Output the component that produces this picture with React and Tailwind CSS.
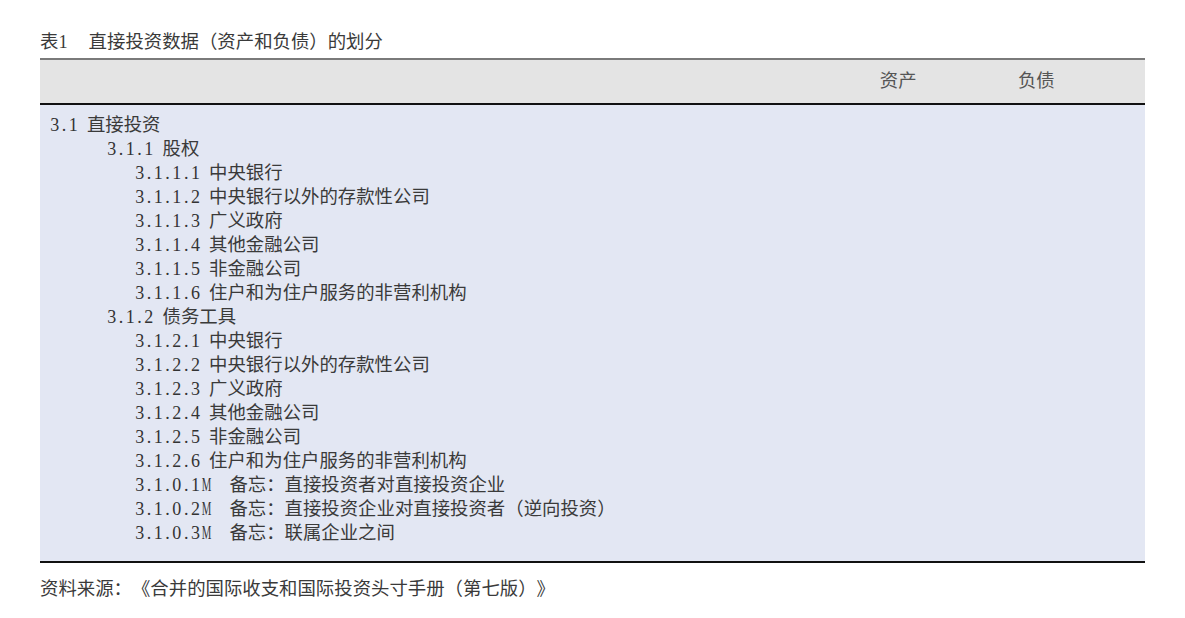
import React from "react";

const cjk = { fontFamily: '"Noto Sans CJK SC", "Noto Sans", sans-serif' };

const rows = [
  { no: "3.1", text: "直接投资", level: 1 },
  { no: "3.1.1", text: "股权", level: 2 },
  { no: "3.1.1.1", text: "中央银行", level: 3 },
  { no: "3.1.1.2", text: "中央银行以外的存款性公司", level: 3 },
  { no: "3.1.1.3", text: "广义政府", level: 3 },
  { no: "3.1.1.4", text: "其他金融公司", level: 3 },
  { no: "3.1.1.5", text: "非金融公司", level: 3 },
  { no: "3.1.1.6", text: "住户和为住户服务的非营利机构", level: 3 },
  { no: "3.1.2", text: "债务工具", level: 2 },
  { no: "3.1.2.1", text: "中央银行", level: 3 },
  { no: "3.1.2.2", text: "中央银行以外的存款性公司", level: 3 },
  { no: "3.1.2.3", text: "广义政府", level: 3 },
  { no: "3.1.2.4", text: "其他金融公司", level: 3 },
  { no: "3.1.2.5", text: "非金融公司", level: 3 },
  { no: "3.1.2.6", text: "住户和为住户服务的非营利机构", level: 3 },
  { no: "3.1.0.1M", text: "备忘：直接投资者对直接投资企业", level: 3, memo: true },
  { no: "3.1.0.2M", text: "备忘：直接投资企业对直接投资者（逆向投资）", level: 3, memo: true },
  { no: "3.1.0.3M", text: "备忘：联属企业之间", level: 3, memo: true },
];

// half-width cells, like a Song face's digits
function Num({ value }) {
  return (
    <span className="font-['Liberation_Serif',serif] text-[18px] text-[#333]">
      {value.split("").map((c, i) => (
        <span
          key={i}
          className={
            c === "M"
              ? "inline-block w-[9.3px] text-center scale-x-60"
              : "inline-block w-[9.3px] text-center"
          }
        >
          {c}
        </span>
      ))}
    </span>
  );
}

function Row({ no, text, level, memo }) {
  const indent = level === 1 ? "pl-[10px]" : level === 2 ? "pl-[67px]" : "pl-[95px]";
  return (
    <div className={`flex items-baseline h-6 leading-6 ${indent}`}>
      <Num value={no} />
      <span className={memo ? "ml-[20px]" : "ml-[9px]"} style={cjk}>
        {text}
      </span>
    </div>
  );
}

export default function App() {
  return (
    <div
      className="w-[1185px] h-[618px] bg-white text-[#3a3a3a] text-[18.4px] px-[40px] pt-[28px] overflow-hidden [text-spacing-trim:space-all]"
      style={cjk}
    >
      <div className="h-6 flex items-baseline leading-6">
        <span>表</span>
        <span className="font-['Liberation_Serif',serif]">1</span>
        <span className="ml-[21px]">直接投资数据（资产和负债）的划分</span>
      </div>

      <div className="mt-[6px] w-[1105px]">
        <div className="border-t-2 border-[#7a7a7a] bg-[#e4e4e4] h-[45px] pb-[4px] grid grid-cols-8 items-center text-[#555]">
          <div className="col-span-6"></div>
          <div className="pl-[11px]">资产</div>
          <div className="pl-[11px]">负债</div>
        </div>
        <div className="border-t-2 border-[#111] bg-[#e3e7f3] pt-[6px] pb-[18px] border-b-2 border-b-[#111]">
          {rows.map((r) => (
            <Row key={r.no} {...r} />
          ))}
        </div>
      </div>

      <div className="mt-[13px] h-6 flex items-center">
        资料来源：《合并的国际收支和国际投资头寸手册（第七版）》
      </div>
    </div>
  );
}
